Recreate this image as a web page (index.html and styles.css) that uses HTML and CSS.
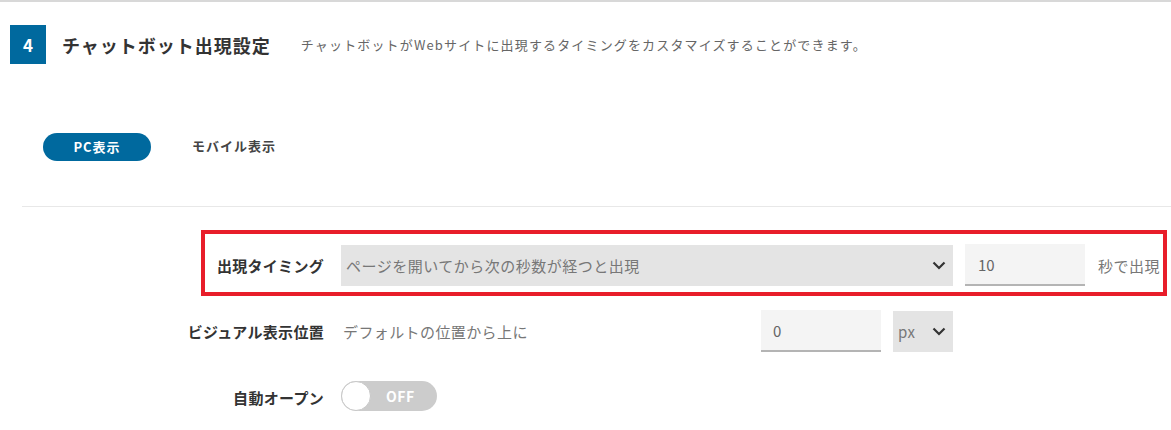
FILE: index.html
```html
<!DOCTYPE html>
<html lang="ja">
<head>
<meta charset="utf-8">
<title>チャットボット出現設定</title>
<link rel="stylesheet" href="styles.css">
</head>
<body>
<div class="topline"></div>
<div class="section-head">
  <div class="badge">4</div>
  <h2 class="title">チャットボット出現設定</h2>
  <p class="subtitle">チャットボットがWebサイトに出現するタイミングをカスタマイズすることができます。</p>
</div>

<div class="tabs">
  <span class="tab tab-active">PC表示</span>
  <span class="tab">モバイル表示</span>
</div>

<div class="divider"></div>

<div class="form">
  <div class="row row-highlight">
    <div class="label"><span>出現タイミング</span></div>
    <div class="control-area">
      <div class="select select-wide">
        <span class="select-text">ページを開いてから次の秒数が経つと出現</span>
        <svg class="chev" width="14" height="9" viewBox="0 0 14 9"><path d="M1.5 1.5 L7 7 L12.5 1.5" fill="none" stroke="#333" stroke-width="2.2"/></svg>
      </div>
    </div>
    <div class="input">10</div>
    <span class="unit">秒で出現</span>
  </div>

  <div class="row">
    <div class="label"><span>ビジュアル表示位置</span></div>
    <div class="control-area">
      <span class="plain-text">デフォルトの位置から上に</span>
      <div class="input">0</div>
      <div class="select select-small">
        <span class="select-text">px</span>
        <svg class="chev" width="14" height="9" viewBox="0 0 14 9"><path d="M1.5 1.5 L7 7 L12.5 1.5" fill="none" stroke="#333" stroke-width="2.2"/></svg>
      </div>
    </div>
  </div>

  <div class="row">
    <div class="label"><span>自動オープン</span></div>
    <div class="toggle">
      <span class="knob"></span>
      <span class="toggle-text">OFF</span>
    </div>
  </div>
</div>
</body>
</html>
```

FILE: styles.css
```css
* { box-sizing: border-box; }

body {
  margin: 0;
  background: #ffffff;
  font-family: "Noto Sans CJK JP", "Noto Sans", "Liberation Sans", sans-serif;
  color: #333;
  width: 1171px;
  overflow: hidden;
}

.topline {
  height: 2px;
  background: #d8d8d8;
}

.section-head {
  display: flex;
  align-items: center;
  margin-top: 23px;
  padding-left: 10px;
}

.badge {
  width: 36px;
  height: 39px;
  background: #00699e;
  color: #fff;
  font-weight: 700;
  font-size: 17px;
  display: flex;
  align-items: center;
  justify-content: center;
}

.title {
  margin: 0 0 0 16px;
  font-size: 18px;
  font-weight: 700;
  letter-spacing: 1px;
  color: #333;
  line-height: 1;
}

.subtitle {
  margin: 0 0 0 30px;
  font-size: 13px;
  letter-spacing: 1.15px;
  color: #666;
  line-height: 1;
}

.tabs {
  display: flex;
  align-items: center;
  margin-top: 69px;
  padding-left: 43px;
  gap: 41px;
}

.tab {
  font-size: 13px;
  font-weight: 700;
  color: #444;
  letter-spacing: 1px;
  line-height: 1;
  margin-top: -4px;
}

.tab-active {
  width: 108px;
  height: 28px;
  border-radius: 14px;
  background: #00699e;
  color: #fff;
  display: flex;
  align-items: center;
  justify-content: center;
  margin-top: 0;
  padding-bottom: 2px;
}

.divider {
  margin-top: 45px;
  margin-left: 22px;
  border-top: 1px solid #e8e8e8;
}

.form {
  margin-top: 23px;
}

.row {
  display: flex;
  align-items: center;
  margin-left: 201px;
  width: 966px;
  min-height: 66px;
  border: 4px solid transparent;
  padding: 10px 0 6px 0;
}

.row-highlight {
  border-color: #e81d2a;
}

.label {
  width: 119px;
  flex: none;
  display: flex;
  justify-content: flex-end;
  font-size: 15px;
  font-weight: 700;
  color: #333;
  letter-spacing: 0.3px;
  margin-right: 17px;
  white-space: nowrap;
}

.control-area {
  width: 612px;
  display: flex;
  align-items: center;
  gap: 12px;
}

.select {
  height: 41px;
  background: #e4e4e4;
  display: flex;
  align-items: center;
  justify-content: space-between;
  padding: 0 7px 0 5px;
}

.select-wide {
  width: 612px;
}

.select-small {
  width: 60px;
  flex: none;
}

.select-text {
  font-size: 15px;
  letter-spacing: 0.5px;
  color: #777;
}

.chev {
  flex: none;
}

.input {
  width: 120px;
  height: 42px;
  flex: none;
  background: #f4f4f4;
  border-bottom: 2px solid #b4b4b4;
  display: flex;
  align-items: center;
  padding-left: 12px;
  font-size: 15px;
  color: #666;
}

.row-highlight .input {
  margin-left: 12px;
  padding-left: 13px;
}

.unit {
  margin-left: 13px;
  font-size: 15px;
  letter-spacing: 0.5px;
  color: #777;
}

.plain-text {
  flex: 1;
  font-size: 15px;
  letter-spacing: 0.4px;
  color: #777;
  padding-left: 2px;
}

.toggle {
  width: 96px;
  height: 30px;
  border-radius: 15px;
  background: #cccccc;
  display: flex;
  align-items: center;
  margin-top: -2px;
}

.knob {
  width: 30px;
  height: 30px;
  border-radius: 50%;
  background: #fff;
  border: 1px solid #c8c8c8;
  flex: none;
}

.toggle-text {
  margin-left: 15px;
  font-size: 14px;
  font-weight: 700;
  color: #fff;
  letter-spacing: 0.5px;
}
```
